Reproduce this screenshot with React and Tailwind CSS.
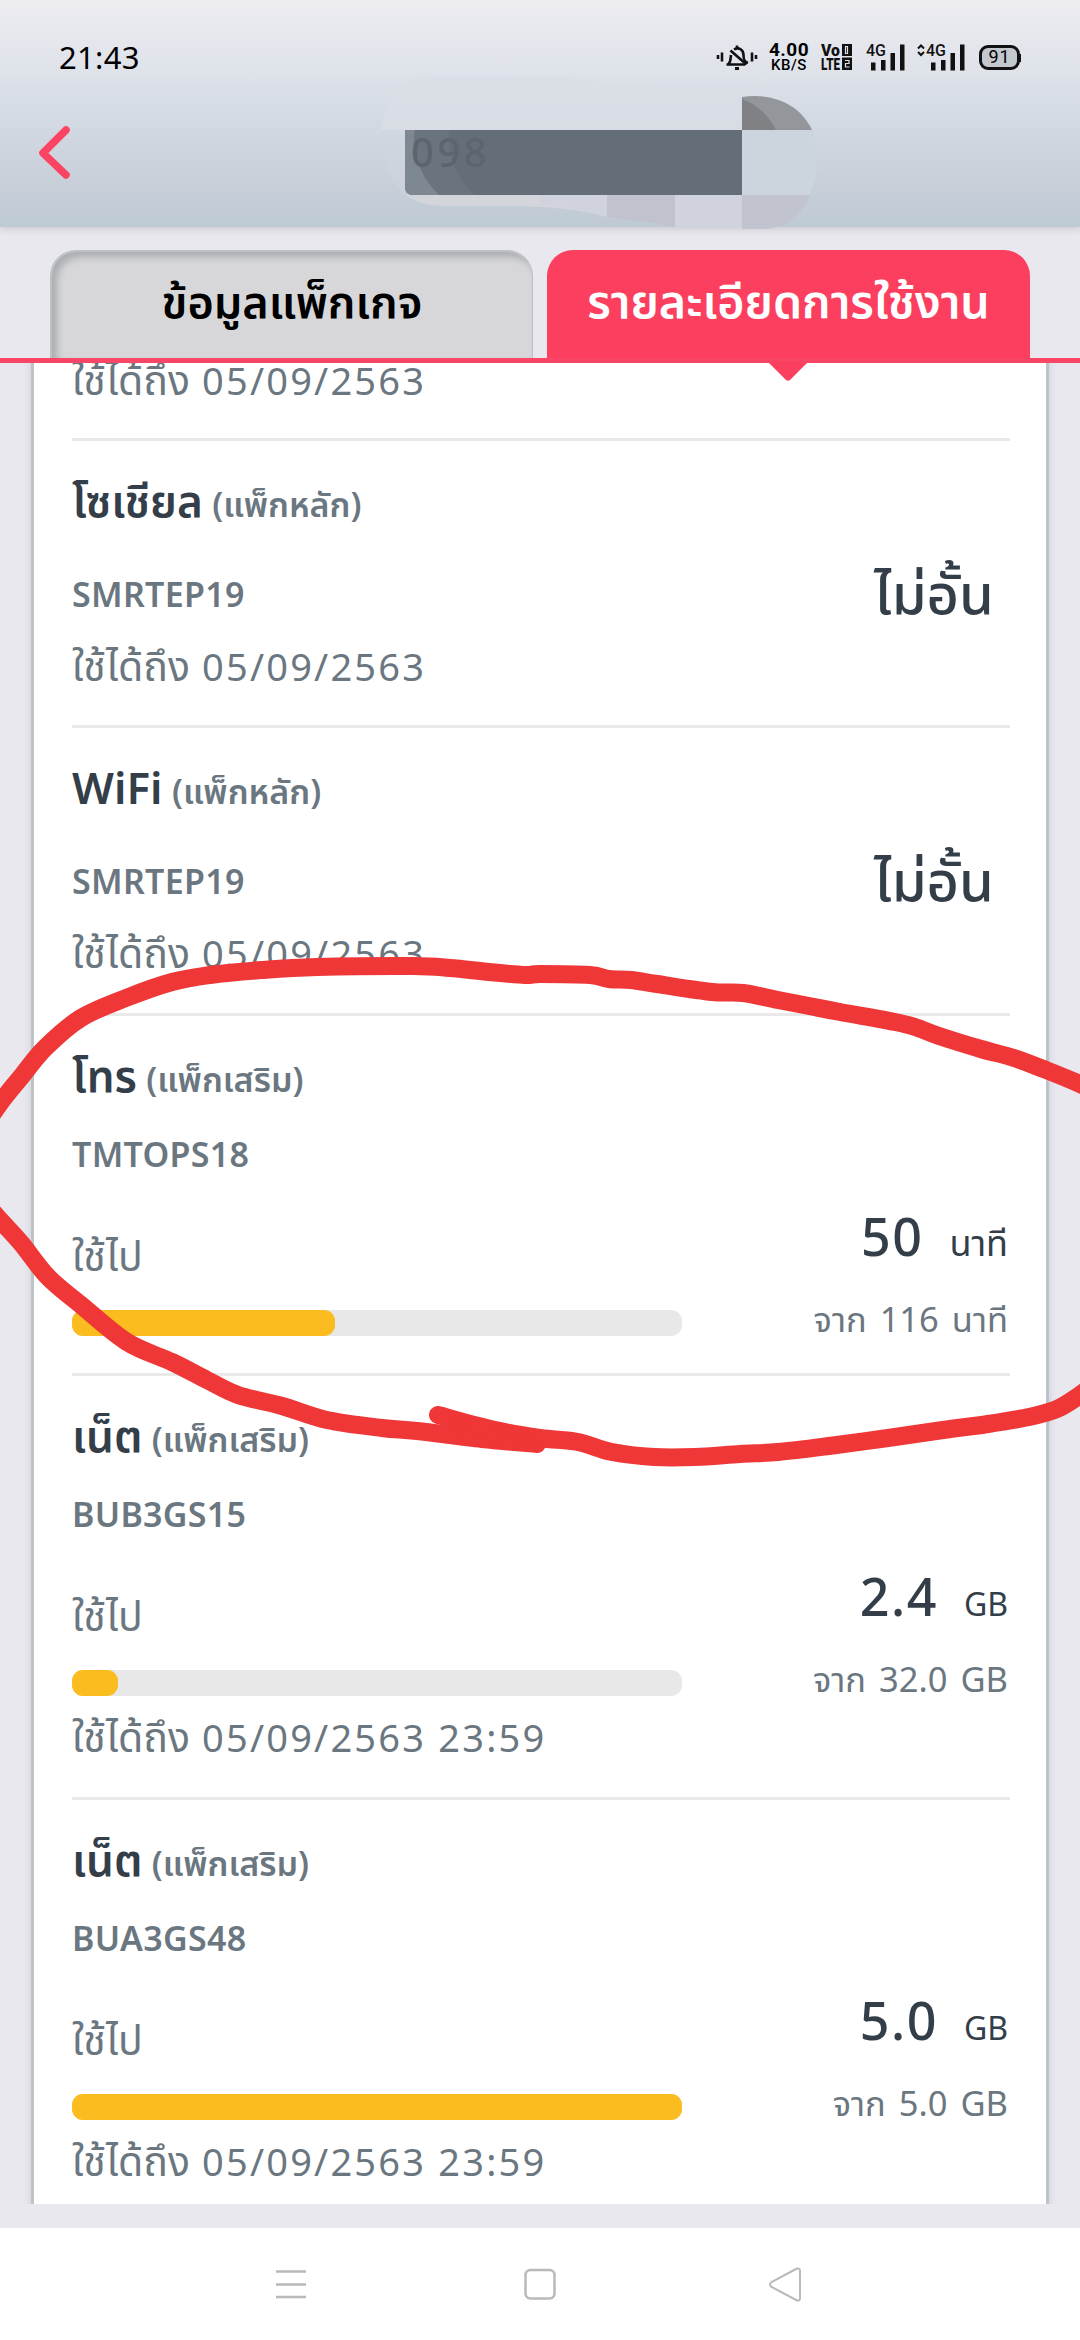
import React from "react";

const packages = [
  {
    id: 1,
    name: "โซเชียล",
    type: "(แพ็กหลัก)",
    code: "SMRTEP19",
    unlimited: true,
    expire: "05/09/2563",
    height: "h-[287px]",
  },
  {
    id: 2,
    name: "WiFi",
    type: "(แพ็กหลัก)",
    code: "SMRTEP19",
    unlimited: true,
    expire: "05/09/2563",
    height: "h-[288px]",
  },
  {
    id: 3,
    name: "โทร",
    type: "(แพ็กเสริม)",
    code: "TMTOPS18",
    used: "50",
    total: "116",
    unit: "นาที",
    percent: 43.1,
    height: "h-[360px]",
  },
  {
    id: 4,
    name: "เน็ต",
    type: "(แพ็กเสริม)",
    code: "BUB3GS15",
    used: "2.4",
    total: "32.0",
    unit: "GB",
    percent: 7.6,
    expire: "05/09/2563 23:59",
    height: "h-[424px]",
  },
  {
    id: 5,
    name: "เน็ต",
    type: "(แพ็กเสริม)",
    code: "BUA3GS48",
    used: "5.0",
    total: "5.0",
    unit: "GB",
    percent: 100,
    expire: "05/09/2563 23:59",
    height: "h-[424px]",
  },
];

// Marker strokes, as [x, y] points
const upperStroke = [
  [-14, 1124], [0, 1103], [21, 1077], [45, 1048], [81, 1018], [126, 998], [172, 982], [210, 975],
  [262, 970], [317, 967], [413, 966], [450, 968], [489, 972], [525, 975], [540, 974], [590, 975],
  [609, 979], [631, 980], [657, 984], [712, 992], [743, 993], [778, 1000], [809, 1006], [840, 1012],
  [895, 1022], [915, 1027], [939, 1036], [981, 1049], [1014, 1058], [1046, 1070], [1080, 1084], [1094, 1091],
];
const lowerStroke = [
  [-14, 1204], [0, 1220], [21, 1243], [48, 1277], [81, 1305], [127, 1342], [172, 1362], [207, 1380],
  [238, 1395], [282, 1406], [327, 1420], [382, 1428], [417, 1431], [482, 1439], [537, 1444],
];
const tailStroke = [
  [438, 1415], [495, 1430], [540, 1438], [578, 1442], [612, 1452], [654, 1457], [695, 1457], [740, 1454],
  [778, 1452], [829, 1446], [888, 1438], [943, 1430], [988, 1424], [1029, 1417], [1057, 1409], [1080, 1395], [1094, 1384],
];

// Smooth line through all points
const toPath = (points) => {
  let d = `M${points[0][0]} ${points[0][1]}`;
  for (let i = 0; i < points.length - 1; i++) {
    const p0 = points[i - 1] || points[i];
    const p1 = points[i];
    const p2 = points[i + 1];
    const p3 = points[i + 2] || p2;
    d += `C${p1[0] + (p2[0] - p0[0]) / 6} ${p1[1] + (p2[1] - p0[1]) / 6} ${p2[0] - (p3[0] - p1[0]) / 6} ${p2[1] - (p3[1] - p1[1]) / 6} ${p2[0]} ${p2[1]}`;
  }
  return d;
};

const StatusBar = () => (
  <div className="flex items-center h-[54px] mt-[30px] pl-[59px] pr-[60px] text-black">
    <span className="text-[31px] leading-[54px] tracking-[0.3px]">21:43</span>

    <div className="flex items-center ml-auto">
      {/* Muted bell */}
      <svg className="w-[42px] h-[30px]" viewBox="0 0 42 30" fill="none" stroke="#111" strokeWidth="2.600">
        <path d="M2 13v4M6 10.500v9M36 10.500v9M40 13v4" strokeWidth="2.600" />
        <path d="M10.500 22.500H29M12.500 22c2.500-2.500 2-6 2.500-9M18 7.500c5-3 9.500.5 9.500 5.500 0 4 .5 6.500 4.500 8" />
        <path d="M14.500 8.500l16 14M21 3.500v3" />
        <path d="M19 26.500h4" strokeWidth="3" />
      </svg>

      {/* Network speed */}
      <div className="flex flex-col items-center ml-[11px] w-[40px] font-['Roboto',sans-serif]">
        <span className="text-[19px] leading-[16px] font-bold tracking-[0.5px]">4.00</span>
        <span className="text-[15px] leading-[15px] font-medium tracking-[0.5px]">KB/S</span>
      </div>

      {/* VoLTE */}
      <svg className="w-[32px] h-[34px] ml-[12px]" viewBox="0 -2 32 34">
        <g fontFamily="Roboto" fontWeight="900" fill="#111">
          <text x="0" y="13.500" fontSize="16" textLength="19" lengthAdjust="spacingAndGlyphs">Vo</text>
          <text x="0" y="27.500" fontSize="16" textLength="19" lengthAdjust="spacingAndGlyphs">LTE</text>
        </g>
        <rect x="21" y="2" width="10" height="12" fill="#111" />
        <rect x="21" y="15.500" width="10" height="12.500" fill="#111" />
        <path d="M24.500 4.500h2v7h-2zM24 18.500h4v3h-3.500v3.500h4" fill="none" stroke="#dfe2e9" strokeWidth="1.200" />
      </svg>

      {/* Signal, SIM 1 */}
      <svg className="w-[39px] h-[30px] ml-[13px]" viewBox="0 0 39 30" fill="#111">
        <text x="0" y="13.500" fontFamily="Roboto" fontWeight="500" fontSize="17" textLength="20" lengthAdjust="spacingAndGlyphs">4G</text>
        <path d="M5 20.500h4.500v8H5zM15 18h4.500v10.500H15zM24.500 11h4.500v17.500h-4.500zM34 2.500h4.500v26H34z" />
      </svg>

      {/* Signal, SIM 2 */}
      <svg className="w-[49px] h-[30px] ml-[12px]" viewBox="0 0 49 30" fill="#111">
        <path d="M1 6.500l3-3 3 3M1 10l3 3 3-3" fill="none" stroke="#111" strokeWidth="2" />
        <text x="9" y="13.500" fontFamily="Roboto" fontWeight="500" fontSize="17" textLength="20" lengthAdjust="spacingAndGlyphs">4G</text>
        <path d="M14 20.500h4.500v8H14zM24 18h4.500v10.500H24zM33.500 11h4.500v17.500h-4.500zM43 2.500h4.500v26H43z" />
      </svg>

      {/* Battery */}
      <div className="relative flex items-center justify-center w-[41px] h-[25px] ml-[13px] rounded-[9px] border-[3px] border-[#111] bg-[#c3c7ce]">
        <span className="font-['Roboto',sans-serif] text-[18px] leading-none tracking-[1px]">91</span>
        <span className="absolute -right-[4px] top-[6px] w-[2px] h-[8px] bg-[#111]" />
      </div>
    </div>
  </div>
);

const Header = () => (
  <div className="relative z-10 h-[227px] bg-[linear-gradient(180deg,#ededf1_0%,#e1e4eb_26%,#d2d9e2_55%,#c8cfd9_80%,#becad3_100%)] shadow-[0_1px_8px_rgba(60,50,70,0.22)]">
    <div className="flow-root">
      <StatusBar />
      <div className="flex h-[54px] mt-[41px] pl-[38px]">
        <svg className="w-[34px] h-[54px]" viewBox="0 0 34 54" fill="none">
          <path
            d="M28 5L5 28L28 50"
            stroke="#fb4363"
            strokeWidth="7.500"
            strokeLinecap="round"
            strokeLinejoin="round"
          />
        </svg>
      </div>
    </div>

    {/* Smudged phone number */}
    <svg className="absolute left-[380px] top-[70px] w-[440px] h-[162px]" viewBox="380 70 440 162">
      <path d="M381 130C384 96 400 77 440 76H560C610 84 650 90 742 92V130Z" fill="#d9dde5" opacity="0.8" />
      <path d="M381 130H405V195C388 180 379 155 381 130Z" fill="#cfd6df" opacity="0.5" />
      <path d="M742 97C778 92 802 108 812 130H742Z" fill="#93969a" />
      <path d="M742 99C760 106 770 118 776 130H742Z" fill="#7f8185" />
      <path d="M742 130H812C822 150 817 178 810 195H742Z" fill="#ccd4de" />
      <path d="M405 195H607V217C560 205 530 206 440 206Q420 205 405 195Z" fill="#d4d5db" />
      <path d="M540 195H607V217C585 211 560 206 540 205Z" fill="#d0d3de" />
      <path d="M607 195H675V227C650 221 620 220 607 217Z" fill="#c1c2ce" />
      <path d="M675 195H742V227H675Z" fill="#d0d3de" />
      <path d="M742 195H810C802 215 785 228 765 229H742Z" fill="#c1c3cf" />
      <path d="M405 130H742V195H411Q405 193 405 188Z" fill="#646e78" />
      <path d="M405 130H415C412 150 420 178 440 195H411Q405 193 405 188Z" fill="#7d8892" />
      <path d="M415 130H450C445 155 458 180 475 195H440C420 178 412 150 415 130Z" fill="#69747e" />
      <text x="411" y="167" fontFamily="Noto Sans" fontWeight="500" fontSize="40" letterSpacing="3.500" fill="#5b656f">
        098
      </text>
    </svg>
  </div>
);

const Tabs = () => (
  <div className="relative h-[136px] pt-[23px] pl-[50px] flex border-b-[5px] border-[#f94666] bg-[#e9e8ee]">
    <div className="w-[483px] h-[108px] rounded-t-[26px] bg-[#d7d7d9] border-t-2 border-l-2 border-r border-[#bcc1c6] shadow-[inset_5px_5px_7px_rgba(90,95,100,0.35)] text-center">
      <span className="block pt-[17px] text-[45px] leading-[64px] font-semibold text-black">
        ข้อมูลแพ็กเกจ
      </span>
    </div>
    <div className="w-[483px] h-[108px] ml-[14px] rounded-t-[26px] bg-[#fc3f5f] text-center">
      <span className="block pt-[18px] text-[46.5px] leading-[64px] font-semibold text-white">
        รายละเอียดการใช้งาน
      </span>
    </div>
    <svg className="absolute left-[766px] top-[134px] w-[44px] h-[21px] z-10" viewBox="0 0 44 21">
      <path d="M1 0H43L24 19Q22 20.500 20 19Z" fill="#fc3f5f" />
    </svg>
  </div>
);

const Expire = ({ value }) => (
  <p className="text-[38px] leading-[50px] h-[50px] whitespace-nowrap text-[#6b7780]">
    <span className="text-[41px] leading-none">ใช้ได้ถึง</span>
    <span className="tracking-[2.2px]"> {value}</span>
  </p>
);

const PackageItem = ({ item }) => (
  <div className={`${item.height} border-t-[3px] border-[#e9e9e9] pt-[29px]`}>
    <h2 className="text-[44px] leading-[60px] h-[60px] whitespace-nowrap font-semibold text-[#333e48]">
      {item.name}{" "}
      <span className="text-[34px] leading-none -ml-[2px] font-semibold text-[#6b7780]">{item.type}</span>
    </h2>

    {item.unlimited ? (
      <div className="flex justify-between">
        <div className="pt-[44px]">
          <p className="text-[34px] leading-[40px] font-semibold tracking-[0.3px] text-[#6b7780]">{item.code}</p>
          <div className="mt-[27px]">
            <Expire value={item.expire} />
          </div>
        </div>
        <p className="pt-[27px] pr-[16px] text-[56px] leading-[70px] font-medium text-[#333e48]">ไม่อั้น</p>
      </div>
    ) : (
      <>
        <p className="mt-[29px] text-[34px] leading-[40px] font-semibold tracking-[0.3px] text-[#6b7780]">{item.code}</p>
        <div className="flex justify-between mt-[32px]">
          <div className="w-[610px] pt-[25px]">
            <p className="text-[38px] leading-[50px] h-[50px] text-[#6b7780]">
              <span className="text-[41px] leading-none">ใช้ไป</span>
            </p>
            <div className="mt-[29px] h-[26px] rounded-[11px] bg-[#e8e8e8]">
              <div
                className="h-full rounded-[11px] bg-[#fabc1e]"
                style={{ width: `${item.percent}%` }}
              />
            </div>
          </div>
          <div className="pr-[2px] text-right">
            <p className="text-[52px] leading-[60px] h-[60px] font-medium tracking-[1.5px] text-[#333e48]">
              {item.used}
              <span
                className={`ml-[26px] leading-none font-normal tracking-normal ${
                  item.unit === "GB" ? "text-[32px]" : "text-[36px]"
                }`}
              >
                {item.unit}
              </span>
            </p>
            <p className="mt-[33px] text-[34.5px] leading-[40px] [word-spacing:4px] text-[#6b7780]">
              จาก {item.total} {item.unit}
            </p>
          </div>
        </div>
        {item.expire && (
          <div className="mt-[13px]">
            <Expire value={item.expire} />
          </div>
        )}
      </>
    )}
  </div>
);

const NavBar = () => (
  <div className="h-[112px] bg-white">
    <svg className="w-[1080px] h-[112px]" viewBox="0 0 1080 112" fill="none" stroke="#b9b9b9" strokeWidth="2.500">
      <path d="M276 43.500h30M276 56.500h30M276 69h30" />
      <rect x="525.500" y="42" width="29" height="28.500" rx="5" />
      <path d="M797 40.500L771.500 54Q768.500 56.500 771.500 59L797 72.500Q800 73 800 70V43Q800 40 797 40.500Z" strokeWidth="2" />
    </svg>
  </div>
);

// Hand drawn marker around the call package
const MarkerCircle = () => (
  <svg
    className="absolute inset-0 w-[1080px] h-[2340px] pointer-events-none z-20"
    viewBox="0 0 1080 2340"
    fill="none"
    stroke="#ef3737"
    strokeWidth="18"
    strokeLinecap="round"
    strokeLinejoin="round"
  >
    <path d={toPath(upperStroke)} />
    <path d={toPath(lowerStroke)} />
    <path d={toPath(tailStroke)} />
    <path d="M438 1415L460 1434L537 1444L540 1438Z" fill="#ef3737" strokeWidth="6" />
  </svg>
);

const App = () => {
  return (
    <div className="relative w-[1080px] h-[2340px] overflow-hidden bg-[#e9e8ee] font-['Noto_Sans','Noto_Sans_Thai',sans-serif]">
      <Header />
      <Tabs />

      {/* Package list */}
      <div className="h-[1841px] px-[34px] overflow-hidden">
        <div className="h-[1841px] pl-[38px] pr-[36px] bg-white shadow-[0_0_0_3px_#bcc4ca,0_0_6px_4px_rgba(150,155,165,0.3)]">
          <div className="h-[75px] overflow-hidden">
            <div className="-mt-[8px]">
              <Expire value="05/09/2563" />
            </div>
          </div>
          {packages.map((item) => (
            <PackageItem key={item.id} item={item} />
          ))}
        </div>
      </div>

      <div className="h-[24px]" />
      <NavBar />
      <MarkerCircle />
    </div>
  );
};

export default App;
